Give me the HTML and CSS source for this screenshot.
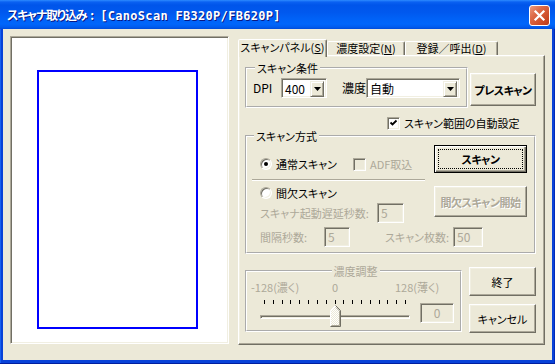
FILE: index.html
```html
<!DOCTYPE html>
<html lang="ja">
<head>
    <meta charset="UTF-8">
    <title>スキャナ取り込み</title>
    <link rel="stylesheet" href="styles.css">
</head>
<body>
<div class="window">
    <div class="titlebar">
        <span class="title"><span class="title-ja">スキャナ取り込み</span><span class="title-sep">:</span><span class="title-en">[CanoScan FB320P/FB620P]</span></span>
        <span class="close-btn">
            <svg width="13" height="13" viewBox="0 0 13 13"><path d="M2.5 2.5L10.5 10.5M10.5 2.5L2.5 10.5" stroke="#fff" stroke-width="2.2" stroke-linecap="square"/></svg>
        </span>
    </div>

    <div class="client">
        <!-- プレビュー -->
        <div class="preview">
            <div class="scan-area"></div>
        </div>

        <div class="tabs">
            <div class="tab-strip">
                <div class="tab tab-scan active">スキャンパネル(<u>S</u>)</div>
                <div class="tab tab-density">濃度設定(<u>N</u>)</div>
                <div class="tab tab-regist">登録／呼出(<u>D</u>)</div>
            </div>

            <div class="tab-panel">
                <div class="row-cond">
                    <fieldset class="group group-cond">
                        <legend>スキャン条件</legend>
                        <span class="lbl lbl-dpi">DPI</span>
                        <span class="combo combo-dpi">
                            <span class="combo-text">400</span>
                            <span class="combo-btn"><svg width="7" height="4" viewBox="0 0 7 4"><path d="M0 0H7L3.5 4Z"/></svg></span>
                        </span>
                        <span class="lbl lbl-density">濃度</span>
                        <span class="combo combo-density">
                            <span class="combo-text">自動</span>
                            <span class="combo-btn"><svg width="7" height="4" viewBox="0 0 7 4"><path d="M0 0H7L3.5 4Z"/></svg></span>
                        </span>
                    </fieldset>
                    <button class="btn bold btn-prescan">プレスキャン</button>
                </div>

                <div class="auto-area">
                    <span class="checkbox"><svg width="9" height="9" viewBox="0 0 9 9"><path d="M1.5 3.5L3.5 5.5L7.5 1.5" fill="none" stroke="#000" stroke-width="1.8"/></svg></span>
                    <span class="check-text">スキャン範囲の自動設定</span>
                </div>

                <fieldset class="group group-method">
                    <legend>スキャン方式</legend>
                    <div class="method-normal">
                        <div class="normal-opts">
                            <span class="radio checked"></span>
                            <span class="txt-normal">通常スキャン</span>
                            <span class="checkbox off"></span>
                            <span class="check-text disabled">ADF取込</span>
                        </div>
                        <button class="btn bold btn-default btn-scan">スキャン</button>
                    </div>
                    <div class="separator"></div>
                    <div class="method-interval">
                        <div class="interval-opts">
                            <div class="opt-line">
                                <span class="radio"></span>
                                <span class="txt-interval">間欠スキャン</span>
                            </div>
                            <div class="field-line">
                                <span class="field-lbl lbl-delay">スキャナ起動遅延秒数:</span>
                                <span class="field f-delay">5</span>
                            </div>
                        </div>
                        <button class="btn bold btn-interval" disabled>間欠スキャン開始</button>
                    </div>
                    <div class="field-line interval-line">
                        <span class="field-lbl lbl-interval">間隔秒数:</span>
                        <span class="field f-interval">5</span>
                        <span class="field-lbl lbl-count">スキャン枚数:</span>
                        <span class="field f-count">50</span>
                    </div>
                </fieldset>

                <div class="row-adjust">
                    <fieldset class="group group-adjust">
                        <legend>濃度調整</legend>
                        <div class="adjust-labels">
                            <span class="lbl-min">-128(濃く)</span>
                            <span class="lbl-zero">0</span>
                            <span class="lbl-max">128(薄く)</span>
                        </div>
                        <div class="ticks">
                            <i></i><i></i><i></i><i></i><i></i><i></i><i></i><i></i><i></i>
                            <i></i><i></i><i></i><i></i><i></i><i></i><i></i><i></i>
                        </div>
                        <div class="slider-row">
                            <div class="slider">
                                <div class="track"></div>
                                <svg class="thumb" width="11" height="22" viewBox="0 0 11 22">
                                    <defs>
                                        <pattern id="dither" width="2" height="2" patternUnits="userSpaceOnUse">
                                            <rect width="2" height="2" fill="#ECE9D8"/>
                                            <rect width="1" height="1" fill="#fff"/>
                                            <rect x="1" y="1" width="1" height="1" fill="#fff"/>
                                        </pattern>
                                    </defs>
                                    <path d="M0.5 21.5V5.5L5.5 0.5L10.5 5.5V21.5Z" fill="url(#dither)"/>
                                    <path d="M0.5 21V5.5L5.5 0.5" fill="none" stroke="#fff"/>
                                    <path d="M5.5 0.5L10.5 5.5V21.5H0.5" fill="none" stroke="#716F64"/>
                                    <path d="M6 2.5L9.5 6V20.5H1.5" fill="none" stroke="#ACA899"/>
                                </svg>
                            </div>
                            <span class="field f-value">0</span>
                        </div>
                    </fieldset>
                    <div class="side-buttons">
                        <button class="btn btn-close">終了</button>
                        <button class="btn btn-cancel">キャンセル</button>
                    </div>
                </div>
            </div>
        </div>
    </div>
</div>
</body>
</html>
```

FILE: styles.css
```css
* {
    margin: 0;
    padding: 0;
    box-sizing: border-box;
}

body {
    width: 555px;
    height: 364px;
    overflow: hidden;
    font-family: "Noto Sans CJK JP", sans-serif;
    font-size: 11px;
    font-feature-settings: "palt";
    color: #000;
}

.window {
    width: 555px;
    height: 364px;
    display: flex;
    flex-direction: column;
    background: #0842D8;
    box-shadow: inset 0 -1px #001E9F, inset 1px 0 #1760F0, inset -1px 0 #0029B8;
}

/* タイトルバー */
.titlebar {
    height: 29px;
    flex-shrink: 0;
    display: flex;
    align-items: center;
    padding: 0 5px 0 7px;
    background: linear-gradient(#2D8BFF 0, #0A61F2 2px, #0055EA 5px, #0058EE 12px, #0063F8 20px, #0066FB 24px, #005CEF 27px, #004BD9 29px);
}

.title {
    flex: 1;
    display: flex;
    align-items: baseline;
    color: #fff;
    font-weight: bold;
    text-shadow: 1px 1px #0A1883;
    white-space: nowrap;
}

.title-ja {
    font-size: 12px;
    letter-spacing: -1.2px;
}

.title-sep {
    padding: 0 6px 0 4px;
    font-size: 12px;
}

.title-en {
    font-family: "DejaVu Sans Mono", monospace;
    font-size: 12px;
    letter-spacing: 0.3px;
}

.close-btn {
    width: 21px;
    height: 21px;
    margin-top: 2px;
    display: flex;
    align-items: center;
    justify-content: center;
    border: 1px solid #fff;
    border-radius: 3px;
    background: linear-gradient(135deg, #EC9A7E 0%, #DD6A47 35%, #CB4A26 75%, #B93B1A 100%);
}

.client {
    flex: 1;
    margin: 0 3px 4px 3px;
    background: #ECE9D8;
    display: flex;
    padding: 7px 0 0 7px;
}

/* プレビュー */
.preview {
    width: 219px;
    height: 308px;
    background: #fff;
    border: 1px solid;
    border-color: #ACA899 #fff #fff #ACA899;
    box-shadow: inset 1px 1px #716F64, inset -1px -1px #F1EFE2;
    padding: 33px 0 0 26px;
}

.scan-area {
    width: 161px;
    height: 259px;
    border: 2px solid #0000FF;
}

/* タブ */
.tabs {
    margin: 3px 0 0 9px;
    width: 307px;
    display: flex;
    flex-direction: column;
}

.tab-strip {
    height: 16px;
    display: flex;
    align-items: flex-end;
}

.tab {
    height: 14px;
    border: 1px solid;
    border-bottom: none;
    border-color: #fff #716F64 transparent #fff;
    box-shadow: inset -1px 0 #ACA899;
    border-radius: 2px 2px 0 0;
    text-align: center;
    line-height: 12px;
    white-space: nowrap;
}

.tab.active {
    position: relative;
    z-index: 1;
    height: 18px;
    margin-bottom: -2px;
    background: #ECE9D8;
    line-height: 14px;
}

.tab-scan { width: 89px; }
.tab-density { width: 78px; }
.tab-regist { width: 93px; }

.tab-panel {
    height: 290px;
    border: 1px solid;
    border-color: #fff #716F64 #716F64 #fff;
    box-shadow: inset -1px -1px #ACA899, inset 1px 1px #F1EFE2;
    padding: 6px 8px 0 6px;
}

/* グループ */
.group {
    border: 2px groove #fff;
    min-width: 0;
}

.group legend {
    line-height: 12px;
    padding: 0 2px;
    margin-left: 2px;
}

.row-cond {
    display: flex;
    align-items: flex-start;
}

.group-cond {
    width: 223px;
    height: 46px;
    padding: 4px 0 0 6px;
    display: flex;
    align-items: flex-start;
}

.lbl {
    line-height: 20px;
    font-size: 12px;
}

.lbl-dpi { width: 28px; }
.lbl-density { width: 24px; margin-left: 15px; }

.combo {
    height: 20px;
    display: flex;
    background: #fff;
    border: 1px solid;
    border-color: #ACA899 #fff #fff #ACA899;
    box-shadow: inset 1px 1px #716F64, inset -1px -1px #F1EFE2;
    padding: 2px;
}

.combo-dpi { width: 46px; }
.combo-density { width: 94px; }

.combo-text {
    flex: 1;
    line-height: 16px;
    padding-left: 1px;
    font-size: 12px;
}

.combo-btn {
    width: 14px;
    height: 16px;
    display: flex;
    align-items: center;
    justify-content: center;
    background: #ECE9D8;
    border: 1px solid;
    border-color: #F1EFE2 #716F64 #716F64 #F1EFE2;
    box-shadow: inset 1px 1px #fff, inset -1px -1px #ACA899;
}

/* ボタン */
.btn {
    font-family: inherit;
    font-size: 11px;
    font-feature-settings: "palt";
    color: #000;
    background: #ECE9D8;
    border: 1px solid;
    border-color: #fff #716F64 #716F64 #fff;
    box-shadow: inset -1px -1px #ACA899, inset 1px 1px #F1EFE2;
    white-space: nowrap;
}

.btn.bold {
    font-weight: bold;
    letter-spacing: -0.5px;
}

.btn:disabled {
    color: #ACA899;
    text-shadow: 1px 1px #fff;
}

.btn-default {
    border: 1px solid #000;
    box-shadow: inset 1px 1px #fff, inset -1px -1px #716F64, inset -2px -2px #ACA899, inset 2px 2px #F1EFE2;
    outline: 1px dotted #000;
    outline-offset: -5px;
}

.btn-prescan {
    width: 66px;
    height: 33px;
    margin: 11px 0 0 2px;
}

/* チェックボックス / ラジオ */
.auto-area {
    height: 13px;
    margin-top: 9px;
    padding-left: 142px;
    display: flex;
    align-items: center;
}

.checkbox {
    width: 13px;
    height: 13px;
    flex-shrink: 0;
    display: flex;
    align-items: center;
    justify-content: center;
    background: #fff;
    border: 1px solid;
    border-color: #ACA899 #fff #fff #ACA899;
    box-shadow: inset 1px 1px #716F64, inset -1px -1px #F1EFE2;
}

.checkbox.off {
    background: #ECE9D8;
}

.check-text {
    margin-left: 4px;
    line-height: 13px;
    white-space: nowrap;
}

.disabled {
    color: #ACA899;
}

.radio {
    width: 12px;
    height: 12px;
    flex-shrink: 0;
    border-radius: 50%;
    background: #fff;
    border: 1px solid;
    border-color: #ACA899 #fff #fff #ACA899;
    box-shadow: inset 1px 1px #716F64, inset -1px -1px #F1EFE2;
    display: flex;
    align-items: center;
    justify-content: center;
}

.radio.checked::before {
    content: "";
    width: 4px;
    height: 4px;
    border-radius: 50%;
    background: #000;
}

.group-method {
    width: 291px;
    height: 124px;
    padding: 3px 7px 0 5px;
}

.method-normal {
    display: flex;
    align-items: flex-start;
}

.normal-opts {
    height: 12px;
    margin: 13px 0 0 8px;
    display: flex;
    align-items: center;
}

.txt-normal {
    width: 77px;
    margin-left: 4px;
    line-height: 12px;
}

.btn-scan {
    width: 93px;
    height: 28px;
    margin-left: auto;
}

.separator {
    width: 173px;
    height: 2px;
    margin-top: 6px;
    border-top: 1px solid #ACA899;
    border-bottom: 1px solid #fff;
}

.method-interval {
    display: flex;
    align-items: flex-start;
}

.interval-opts {
    margin-left: 8px;
}

.opt-line {
    height: 12px;
    margin-top: 6px;
    display: flex;
    align-items: center;
}

.txt-interval {
    margin-left: 4px;
    line-height: 12px;
}

.btn-interval {
    width: 93px;
    height: 31px;
    margin: 5px 0 0 auto;
}

.field-line {
    height: 20px;
    margin-top: 4px;
    display: flex;
    align-items: center;
}

.interval-line {
    margin-left: 8px;
}

.field-lbl {
    color: #ACA899;
    white-space: nowrap;
}

.lbl-delay { width: 117px; }
.lbl-interval { width: 64px; }
.lbl-count { width: 68px; margin-left: 35px; }

.field {
    height: 20px;
    color: #ACA899;
    font-size: 12px;
    line-height: 16px;
    padding: 1px 0 0 3px;
    background: #ECE9D8;
    border: 1px solid;
    border-color: #ACA899 #fff #fff #ACA899;
    box-shadow: inset 1px 1px #716F64, inset -1px -1px #F1EFE2;
}

.f-delay { width: 27px; }
.f-interval { width: 26px; }
.f-count { width: 30px; }

/* 濃度調整 */
.row-adjust {
    display: flex;
    align-items: flex-start;
    margin-top: 11px;
}

.group-adjust {
    width: 217px;
    height: 67px;
    padding: 4px 0 0 4px;
    color: #ACA899;
}

.group-adjust legend {
    margin: 0 auto;
}

.adjust-labels {
    height: 12px;
    display: flex;
    line-height: 12px;
    white-space: nowrap;
}

.lbl-min { width: 81px; }
.lbl-zero { width: 63px; }

.ticks {
    width: 142px;
    height: 4px;
    margin: 7px 0 0 13px;
    display: flex;
    justify-content: space-between;
}

.ticks i {
    width: 1px;
    height: 4px;
    background: #000;
}

.slider-row {
    display: flex;
    align-items: flex-start;
}

.slider {
    position: relative;
    width: 150px;
    height: 24px;
    margin-left: 9px;
}

.track {
    height: 4px;
    margin-top: 11px;
    border: 1px solid;
    border-color: #ACA899 #fff #fff #ACA899;
    box-shadow: inset 1px 1px #716F64;
    background: #F1EFE2;
}

.thumb {
    position: absolute;
    left: 70px;
    top: 1px;
}

.f-value {
    width: 34px;
    margin: -1px 0 0 10px;
    text-align: center;
    padding-left: 0;
}

.side-buttons {
    margin: 2px 0 0 7px;
    display: flex;
    flex-direction: column;
    gap: 8px;
}

.side-buttons .btn {
    width: 67px;
    height: 29px;
}
```
